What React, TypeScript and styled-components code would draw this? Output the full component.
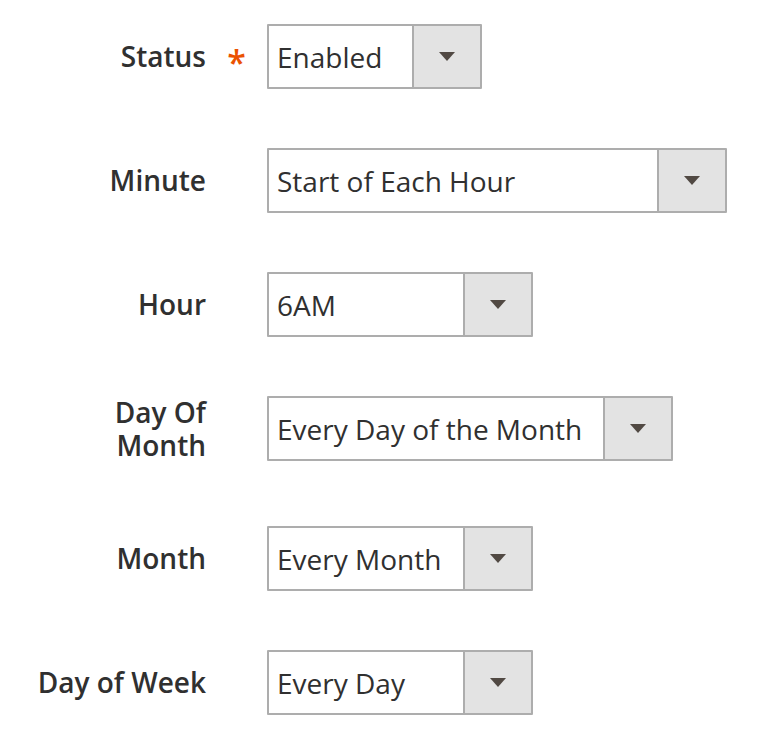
import React from "react";
import styled, { createGlobalStyle } from "styled-components";

const GlobalStyle = createGlobalStyle`
  html, body {
    margin: 0;
    padding: 0;
    background: #ffffff;
  }
  body {
    font-family: "Open Sans", "Liberation Sans", Arial, sans-serif;
    color: #303030;
  }
`;

const Form = styled.div`
  display: flex;
  flex-direction: column;
  gap: 59px;
  padding-top: 24px;
`;

const Field = styled.div`
  display: flex;
  align-items: flex-start;
`;

const Label = styled.label<{ $wrapped?: boolean }>`
  box-sizing: border-box;
  width: 206px;
  padding-left: 30px;
  padding-bottom: ${(p) => (p.$wrapped ? "5px" : "0")};
  min-height: 65px;
  display: flex;
  align-items: center;
  justify-content: flex-end;
  text-align: right;
  font-size: 28px;
  font-weight: 600;
  line-height: 33px;
  color: #303030;
`;

const Marker = styled.span`
  width: 61px;
  height: 65px;
  display: flex;
  align-items: center;
  justify-content: center;
  padding-top: 10px;
  box-sizing: border-box;
  font-size: 34px;
  font-weight: 600;
  color: #eb5202;
`;

const Select = styled.div<{ $width: number }>`
  box-sizing: border-box;
  width: ${(p) => p.$width}px;
  height: 65px;
  border: 2px solid #adadad;
  border-radius: 1px;
  display: flex;
  background: #ffffff;
`;

const Value = styled.span`
  flex: 1;
  display: flex;
  align-items: center;
  padding-left: 8px;
  font-size: 28px;
  font-weight: 400;
  color: #303030;
  white-space: nowrap;
  overflow: hidden;
`;

const Toggle = styled.span`
  width: 66px;
  flex: none;
  border-left: 2px solid #adadad;
  background: #e3e3e3;
  display: flex;
  align-items: center;
  justify-content: center;
`;

const Arrow = () => (
  <svg width="16" height="9" viewBox="0 0 16 9" aria-hidden="true">
    <polygon points="0,0 16,0 8,9" fill="#514943" />
  </svg>
);

type Row = {
  label: string;
  value: string;
  width: number;
  required?: boolean;
  wrapped?: boolean;
};

const rows: Row[] = [
  { label: "Status", value: "Enabled", width: 215, required: true },
  { label: "Minute", value: "Start of Each Hour", width: 460 },
  { label: "Hour", value: "6AM", width: 266 },
  { label: "Day Of Month", value: "Every Day of the Month", width: 406, wrapped: true },
  { label: "Month", value: "Every Month", width: 266 },
  { label: "Day of Week", value: "Every Day", width: 266 },
];

export default function App() {
  return (
    <>
      <GlobalStyle />
      <Form>
        {rows.map((r) => (
          <Field key={r.label}>
            <Label $wrapped={r.wrapped}>{r.label}</Label>
            <Marker>{r.required ? "*" : ""}</Marker>
            <Select $width={r.width}>
              <Value>{r.value}</Value>
              <Toggle>
                <Arrow />
              </Toggle>
            </Select>
          </Field>
        ))}
      </Form>
    </>
  );
}
